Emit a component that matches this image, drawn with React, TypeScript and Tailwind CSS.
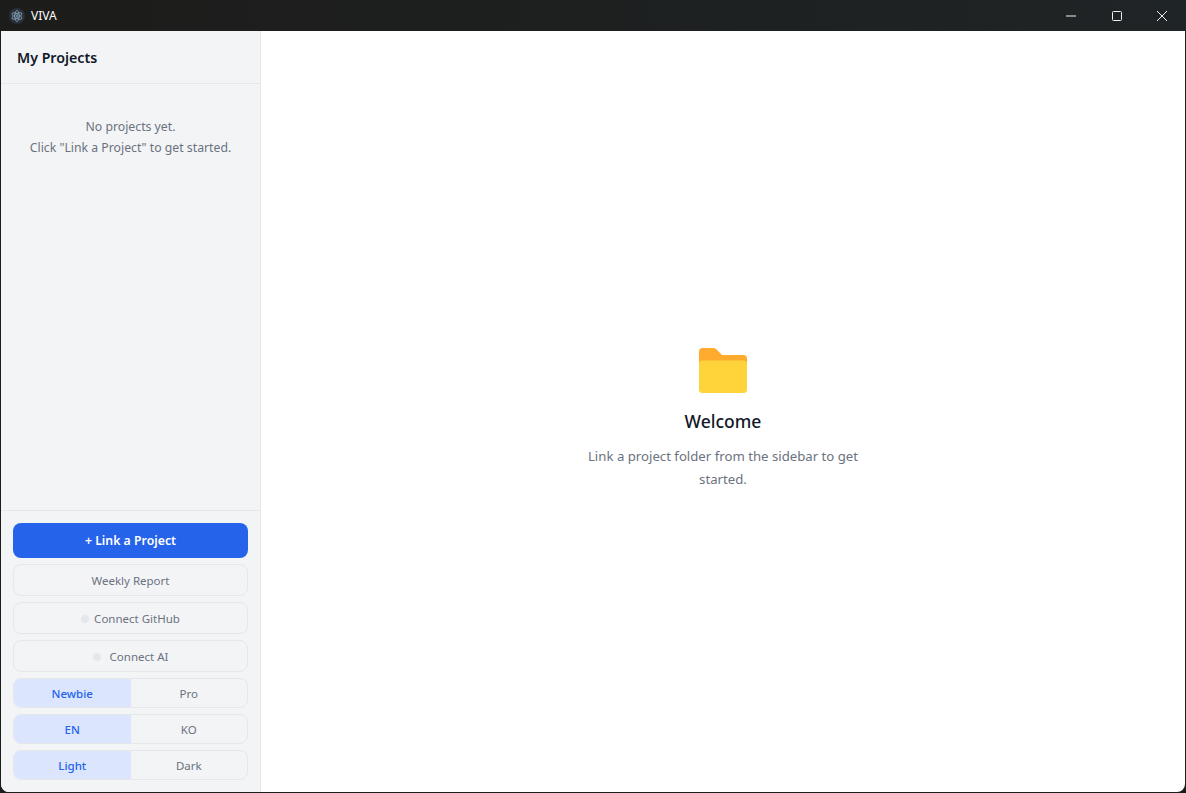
function ElectronLogo() {
  return (
    <div className="w-4 h-4 rounded-full bg-[#2b2e3b] flex items-center justify-center">
      <svg viewBox="0 0 16 16" className="w-4 h-4" fill="none" stroke="#8fb4c4" strokeWidth="0.7">
        <ellipse cx="8" cy="8" rx="5.500" ry="2.200" transform="rotate(30 8 8)" />
        <ellipse cx="8" cy="8" rx="5.500" ry="2.200" transform="rotate(90 8 8)" />
        <ellipse cx="8" cy="8" rx="5.500" ry="2.200" transform="rotate(150 8 8)" />
        <circle cx="8" cy="8" r="0.900" fill="#8fb4c4" stroke="none" />
      </svg>
    </div>
  );
}

function FolderIcon() {
  return (
    <svg viewBox="0 0 48 45" className="w-12 h-[45px]">
      <path d="M0 3.500A3.500 3.500 0 0 1 3.500 0H14c1.500 0 2.600.6 3.600 1.600L23 7h21.500a3.500 3.500 0 0 1 3.500 3.500V20H0z" fill="#ffab2e" />
      <path d="M0 16a3.500 3.500 0 0 1 3.500-3.500h41A3.500 3.500 0 0 1 48 16v25.500a3.500 3.500 0 0 1-3.500 3.500h-41A3.500 3.500 0 0 1 0 41.500z" fill="#ffd43b" />
    </svg>
  );
}

function Toggle({ left, right }: { left: string; right: string }) {
  return (
    <div className="flex h-[30px] rounded-lg border border-[#e5e7eb] overflow-hidden text-[11.500px]">
      <div className="flex-1 flex items-center justify-center pt-px bg-[#dbe6fe] text-[#2563eb] font-medium">{left}</div>
      <div className="flex-1 flex items-center justify-center pt-px text-[#6b7280]">{right}</div>
    </div>
  );
}

function OutlineButton({ children }: { children: React.ReactNode }) {
  return (
    <div className="h-8 pt-px rounded-lg border border-[#e5e7eb] flex items-center justify-center text-[11.500px] text-[#6b7280]">
      {children}
    </div>
  );
}

export default function App() {
  return (
    <div className="w-[1186px] h-[793px] flex flex-col bg-[#1c1c1a] overflow-hidden font-['Noto_Sans',sans-serif]">
      {/* title bar */}
      <div className="h-[31px] shrink-0 flex items-center bg-gradient-to-r from-[#1c1c1a] to-[#1f2426] text-white">
        <div className="ml-[9px] mr-[6px]">
          <ElectronLogo />
        </div>
        <span className="text-xs">VIVA</span>
        <div className="ml-auto flex items-center text-[#f0f0f0] pr-[19px] gap-[35.500px]">
          <svg viewBox="0 0 10 10" className="w-2.5 h-2.5" stroke="currentColor" strokeWidth="1" fill="none">
            <path d="M0 5h10" />
          </svg>
          <svg viewBox="0 0 10 10" className="w-2.5 h-2.5" stroke="currentColor" strokeWidth="1" fill="none">
            <rect x="0.500" y="0.500" width="9" height="9" rx="1" />
          </svg>
          <svg viewBox="0 0 10 10" className="w-2.5 h-2.5" stroke="currentColor" strokeWidth="1" fill="none">
            <path d="M0 0l10 10M10 0L0 10" />
          </svg>
        </div>
      </div>

      <div className="flex-1 flex mx-px mb-px rounded-b-lg overflow-hidden bg-white min-h-0">
        {/* sidebar */}
        <aside className="w-[259px] shrink-0 box-content flex flex-col bg-[#f3f4f6] border-r border-[#e5e7eb]">
          <div className="h-[53px] shrink-0 flex items-center px-4 pt-0.5 border-b border-[#e5e7eb]">
            <h2 className="text-[14.200px] font-semibold text-[#111827]">My Projects</h2>
          </div>
          <div className="flex-1 pt-[33px] text-center text-[12.250px] leading-5 text-[#6b7280]">
            <p>No projects yet.</p>
            <p className="mt-px">Click "Link a Project" to get started.</p>
          </div>
          <div className="shrink-0 border-t border-[#e5e7eb] px-3 pt-3 pb-3 flex flex-col gap-1.5">
            <div className="h-[35px] pt-0.5 rounded-lg bg-[#2563eb] text-white text-[12.300px] font-semibold flex items-center justify-center">
              + Link a Project
            </div>
            <OutlineButton>Weekly Report</OutlineButton>
            <OutlineButton>
              <span className="w-2 h-2 rounded-full bg-[#e5e7eb] mr-[5px]" />
              Connect GitHub
            </OutlineButton>
            <OutlineButton>
              <span className="w-2 h-2 rounded-full bg-[#e5e7eb] mr-[9px]" />
              Connect AI
            </OutlineButton>
            <Toggle left="Newbie" right="Pro" />
            <Toggle left="EN" right="KO" />
            <Toggle left="Light" right="Dark" />
          </div>
        </aside>

        {/* main */}
        <main className="flex-1 flex flex-col items-center justify-center text-center pt-[15px]">
          <FolderIcon />
          <h1 className="mt-4 text-[17.500px] font-medium leading-[24px] text-[#111827]">Welcome</h1>
          <p className="mt-3 w-[280px] text-[13.200px] leading-[23px] text-[#6b7280]">
            Link a project folder from the sidebar to get started.
          </p>
        </main>
      </div>
    </div>
  );
}
